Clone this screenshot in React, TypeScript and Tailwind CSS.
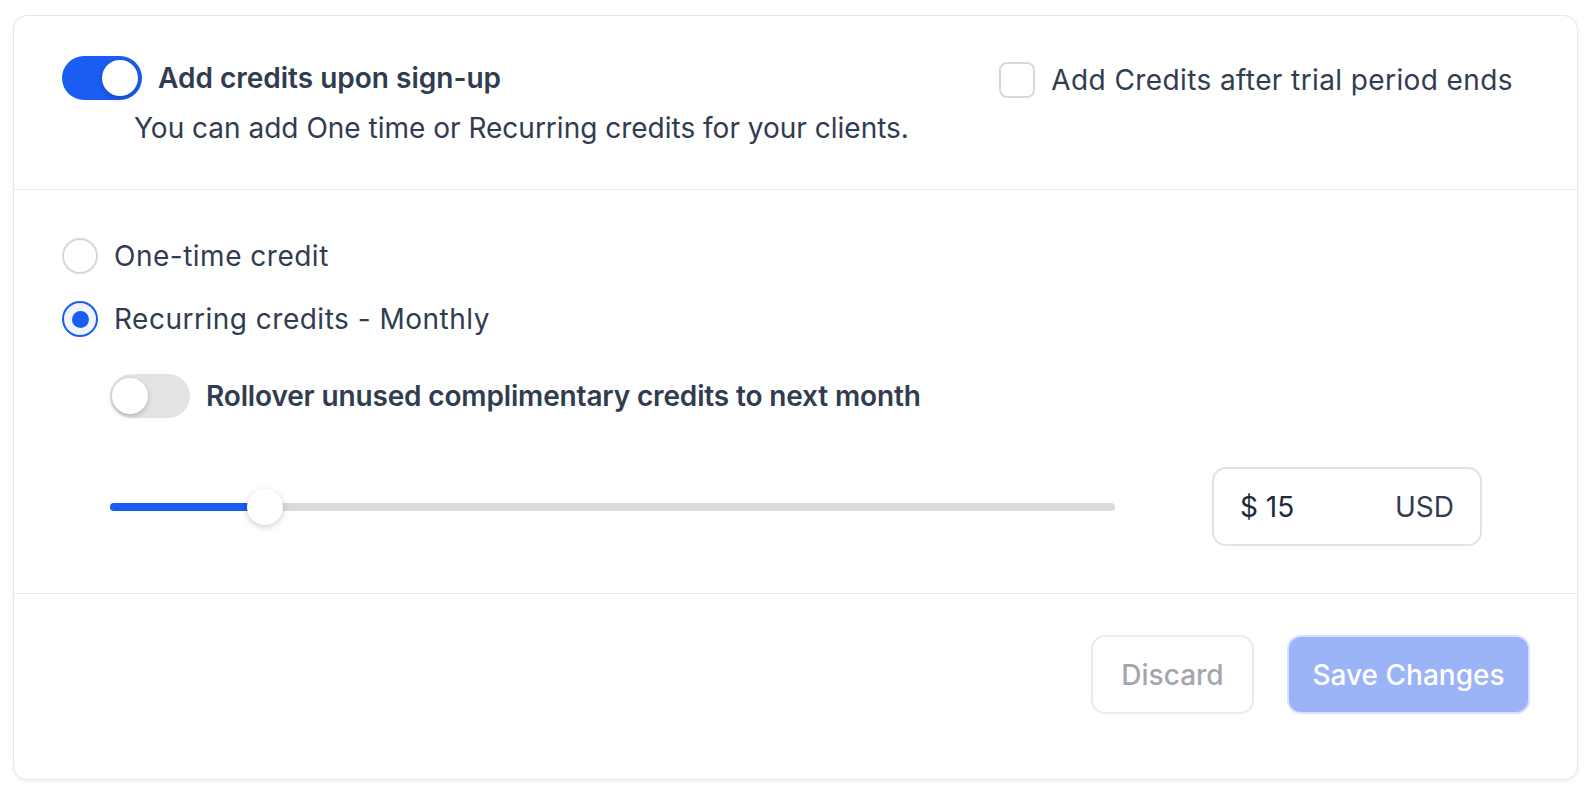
import { useState } from 'react';

const Toggle = ({ on, onClick }: { on: boolean; onClick: () => void }) => (
    <button
        onClick={onClick}
        className={`relative w-[80px] h-[44px] rounded-full shrink-0 transition-colors ${on ? 'bg-[#1a5df2]' : 'bg-[#e3e3e3]'}`}
    >
        <span
            className={`absolute top-[4px] w-[36px] h-[36px] rounded-full bg-white shadow-[0_2px_5px_rgba(0,0,0,0.22)] transition-all ${on ? 'left-[40px]' : 'left-[2px]'}`}
        />
    </button>
);

const Radio = ({ checked, label, onClick }: { checked: boolean; label: string; onClick: () => void }) => (
    <label onClick={onClick} className="flex items-center gap-[16px] cursor-pointer h-[36px]">
        <span
            className={`w-[36px] h-[36px] rounded-full border-2 flex items-center justify-center shrink-0 ${checked ? 'border-[#1a5df2] bg-[#eef3fe]' : 'border-[#d5d8de] bg-white'}`}
        >
            {checked && <span className="w-[17px] h-[17px] rounded-full bg-[#1a5df2]" />}
        </span>
        <span className="text-[28px] leading-[36px] tracking-[0.5px] text-[#313c50]">{label}</span>
    </label>
);

export default function App() {
    const [signup, setSignup] = useState(true);
    const [afterTrial, setAfterTrial] = useState(false);
    const [mode, setMode] = useState<'one' | 'recurring'>('recurring');
    const [rollover, setRollover] = useState(false);
    const [amount] = useState(15);
    const pct = 15.4;

    return (
        <div className="min-h-screen bg-white pt-[15px] pl-[13px] font-['Inter',sans-serif] antialiased">
            <div className="w-[1565px] h-[765px] bg-white border border-[#e6e6ec] rounded-[14px] shadow-[0_2px_4px_rgba(0,0,0,0.06)] flex flex-col">
                {/* sign-up section */}
                <div className="h-[174px] pt-[40px] pl-[48px] pr-[48px] flex justify-between border-b border-[#e9e9ef]">
                    <div>
                        <div className="flex items-center gap-[16px]">
                            <Toggle on={signup} onClick={() => setSignup(!signup)} />
                            <span className="text-[28px] leading-[36px] font-semibold text-[#313c50]">Add credits upon sign-up</span>
                        </div>
                        <p className="mt-[12px] ml-[72px] text-[28px] leading-[32px] text-[#313c50]">
                            You can add One time or Recurring credits for your clients.
                        </p>
                    </div>
                    <label className="flex items-start gap-[16px] mr-[16px] pt-[6px] cursor-pointer" onClick={() => setAfterTrial(!afterTrial)}>
                        <span className={`w-[36px] h-[36px] rounded-[8px] border-2 shrink-0 ${afterTrial ? 'bg-[#1a5df2] border-[#1a5df2]' : 'border-[#d5d8de] bg-white'}`} />
                        <span className="text-[28px] leading-[36px] tracking-[0.4px] text-[#313c50]">Add Credits after trial period ends</span>
                    </label>
                </div>

                {/* credit type section */}
                <div className="pt-[48px] pb-[47px] pl-[48px] pr-[48px] border-b border-[#e9e9ef] flex flex-col">
                    <Radio checked={mode === 'one'} label="One-time credit" onClick={() => setMode('one')} />
                    <div className="mt-[27px]">
                        <Radio checked={mode === 'recurring'} label="Recurring credits - Monthly" onClick={() => setMode('recurring')} />
                    </div>
                    <div className="mt-[37px] ml-[48px] flex items-center gap-[16px]">
                        <Toggle on={rollover} onClick={() => setRollover(!rollover)} />
                        <span className="text-[28px] leading-[36px] font-semibold tracking-[-0.15px] text-[#313c50]">Rollover unused complimentary credits to next month</span>
                    </div>
                    <div className="mt-[49px] ml-[48px] flex items-center">
                        <div className="relative w-[1005px] h-[8px] rounded-full bg-[#d9d9de]">
                            <div className="h-full rounded-full bg-[#1a5df2]" style={{ width: `${pct}%` }} />
                            <span
                                className="absolute top-1/2 -translate-y-1/2 -translate-x-1/2 w-[36px] h-[36px] rounded-full bg-white shadow-[0_2px_6px_rgba(0,0,0,0.2)]"
                                style={{ left: `${pct}%` }}
                            />
                        </div>
                        <div className="ml-[97px] w-[270px] h-[79px] rounded-[14px] border-2 border-[#e2e2e8] flex items-center justify-between pl-[26px] pr-[26px]">
                            <span className="text-[28px] text-[#1e293b]">$ {amount}</span>
                            <span className="text-[28px] text-[#313c50]">USD</span>
                        </div>
                    </div>
                </div>

                {/* actions */}
                <div className="flex-1 pt-[41px] pr-[47px] flex justify-end items-start gap-[33px]">
                    <button className="w-[163px] h-[79px] rounded-[14px] border-2 border-[#ebebef] bg-white text-[28px] font-medium text-[#a3a6b1]">
                        Discard
                    </button>
                    <button className="w-[243px] h-[79px] rounded-[14px] border-2 border-[#d6e1fc] bg-[#9bb3f7] text-[28px] font-medium text-white">
                        Save Changes
                    </button>
                </div>
            </div>
        </div>
    );
}
